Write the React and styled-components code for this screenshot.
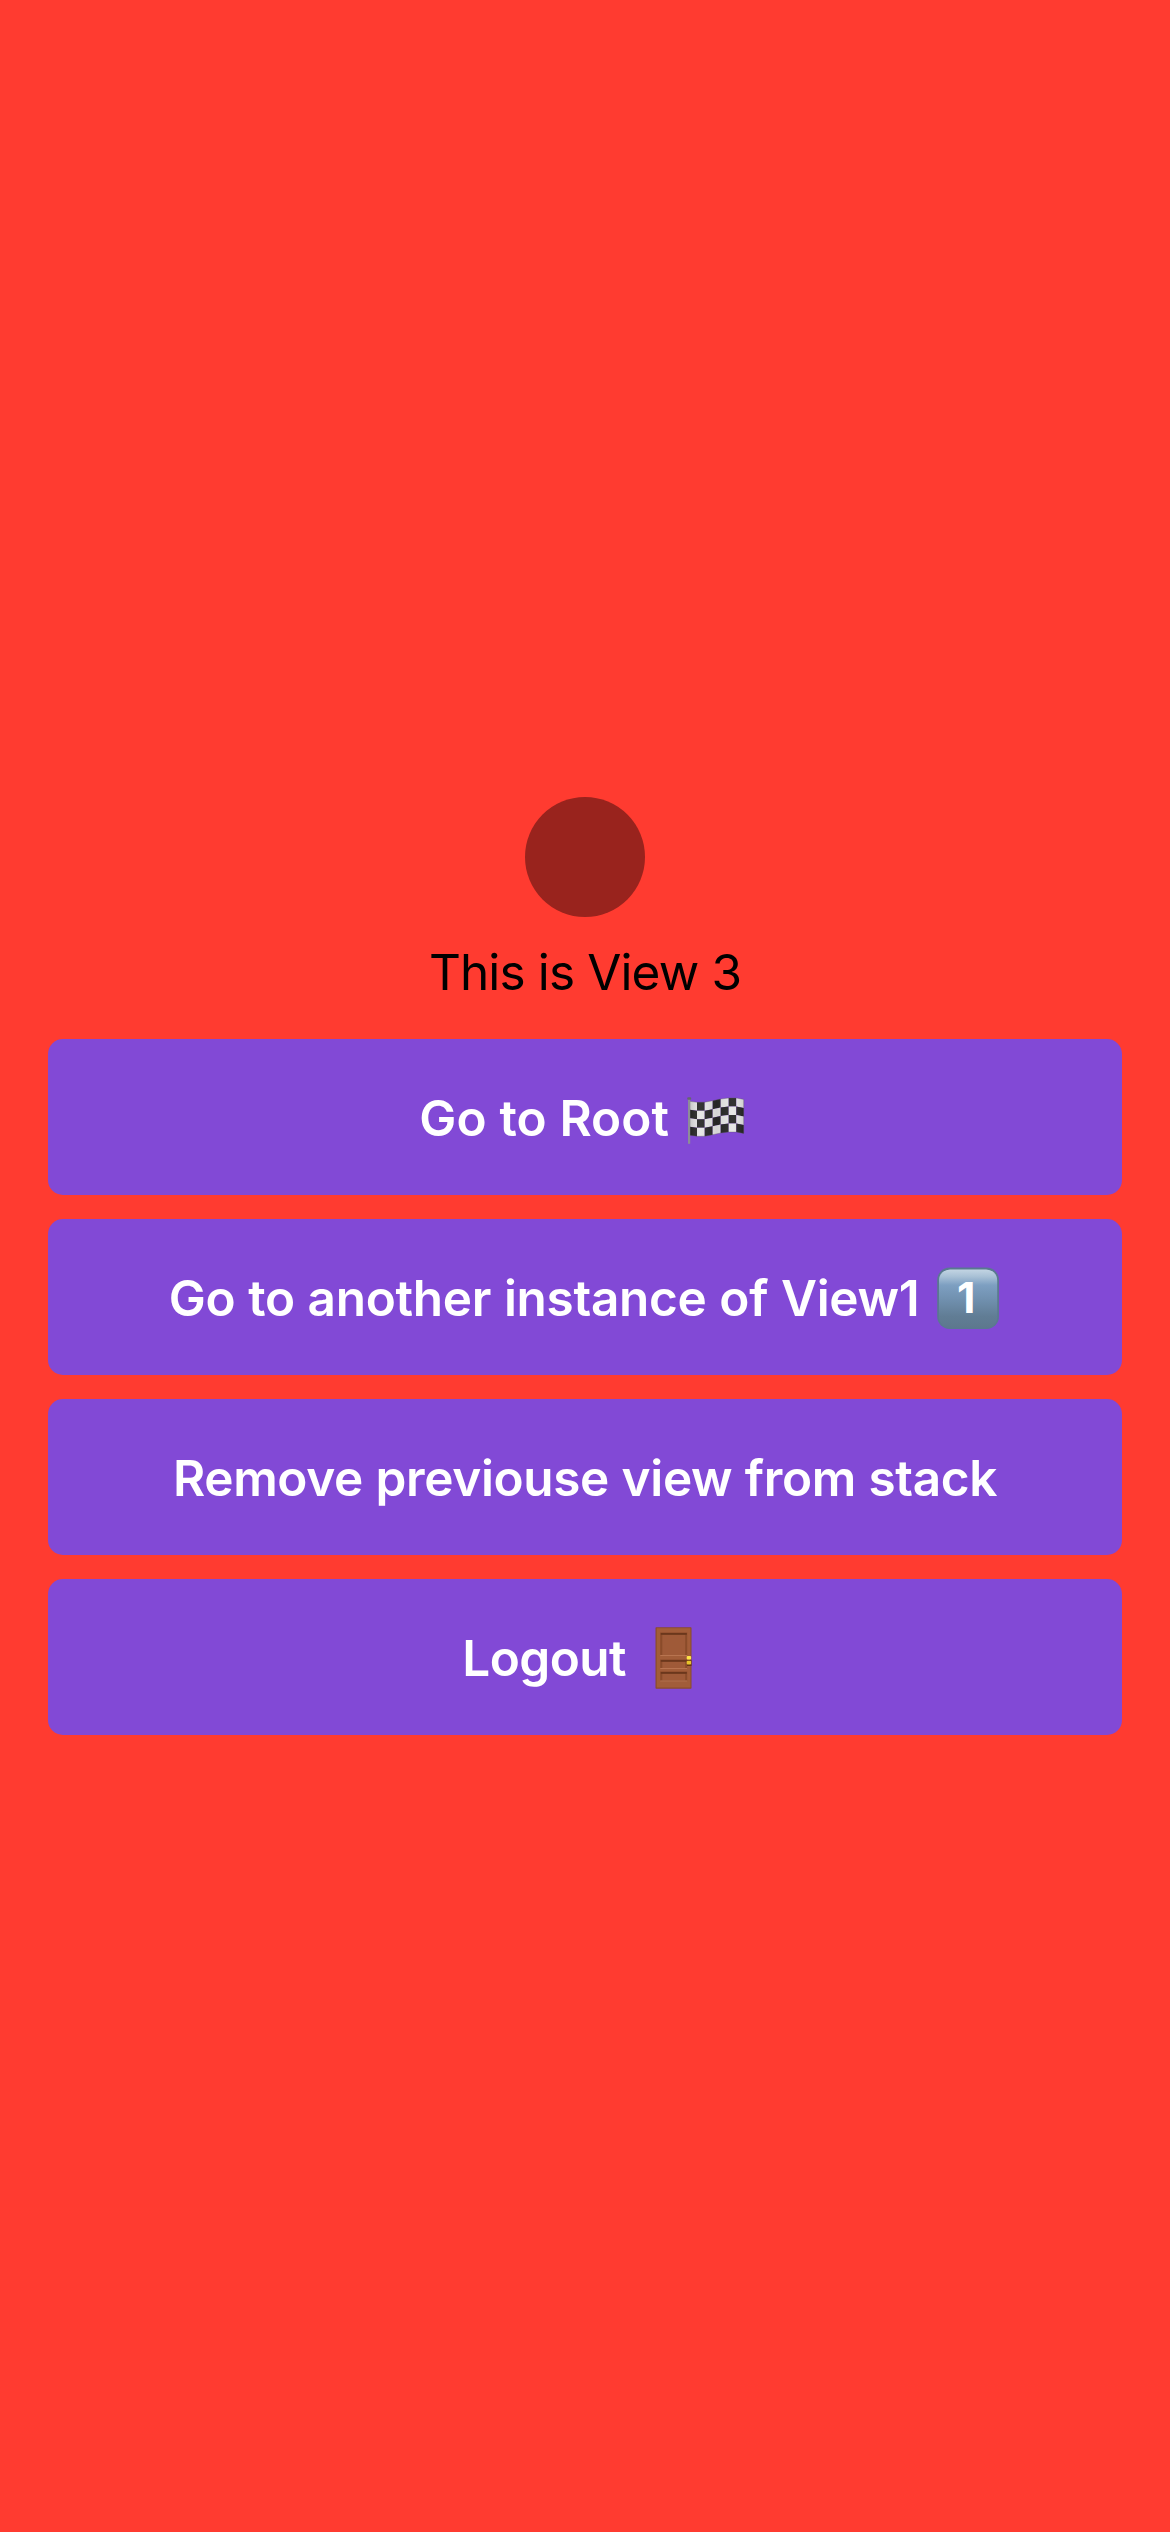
import React from 'react';
import styled, { createGlobalStyle } from 'styled-components';

const GlobalStyle = createGlobalStyle`
  * { box-sizing: border-box; }
  body { margin: 0; background: #ff3b30; }
`;

const Screen = styled.main`
  min-height: 2532px;
  padding: 0 48px;
  display: flex;
  flex-direction: column;
  justify-content: center;
  align-items: center;
  background: #ff3b30;
  font-family: Inter, Roboto, "Liberation Sans", sans-serif;
`;

const Dot = styled.div`
  width: 120px;
  height: 120px;
  border-radius: 50%;
  background: #99231d;
`;

const Title = styled.h1`
  margin: 24px 0;
  height: 74px;
  line-height: 62px;
  font-size: 49.5px;
  font-weight: 400;
  letter-spacing: -0.87px;
  color: #000;
  white-space: nowrap;
`;

const Actions = styled.div`
  align-self: stretch;
  display: flex;
  flex-direction: column;
  gap: 24px;
`;

const ActionButton = styled.button`
  height: 156px;
  padding: 2px 0 0;
  border: 0;
  border-radius: 15px;
  display: flex;
  align-items: center;
  justify-content: center;
  gap: 16.5px;
  background: #8249d6;
  color: #fff;
  font: 600 49.5px/62px Inter, Roboto, "Liberation Sans", sans-serif;
  letter-spacing: ${(p) => p.$tracking || 0}px;
  word-spacing: ${(p) => p.$wordGap || 0}px;
  white-space: nowrap;
`;

const Glyph = styled.svg`
  flex: none;
  width: 64px;
  height: 64px;
  margin-right: 1.3px;
  letter-spacing: 0;
`;

const FLAG_X = [4.7, 12, 19.7, 27.7, 35.7, 43.7, 51.3, 58.7];
const FLAG_TOP = [15.3, 16.3, 16.2, 14.7, 13, 12, 12, 13.4];
const ROW = 8.5;

function Flag() {
  const cells = [];
  for (let r = 0; r < 4; r++) {
    for (let c = 0; c < 7; c++) {
      const y0 = FLAG_TOP[c] + r * ROW;
      const y1 = FLAG_TOP[c + 1] + r * ROW;
      cells.push(
        <polygon
          key={`${r}-${c}`}
          points={`${FLAG_X[c]},${y0} ${FLAG_X[c + 1]},${y1} ${FLAG_X[c + 1]},${y1 + ROW} ${FLAG_X[c]},${y0 + ROW}`}
          fill={(r + c) % 2 ? '#282828' : '#e6e6e6'}
        />
      );
    }
  }
  const top = FLAG_X.map((x, i) => `${x},${FLAG_TOP[i]}`);
  const bottom = FLAG_X.map((x, i) => `${x},${FLAG_TOP[i] + ROW * 4}`).reverse();
  return (
    <Glyph viewBox="0 0 64 64" aria-label="Chequered flag">
      <defs>
        <linearGradient id="fold">
          <stop offset="0" stopColor="#000" stopOpacity=".14" />
          <stop offset=".2" stopColor="#fff" stopOpacity=".06" />
          <stop offset=".5" stopColor="#000" stopOpacity=".08" />
          <stop offset=".8" stopColor="#fff" stopOpacity=".05" />
          <stop offset="1" stopColor="#000" stopOpacity=".1" />
        </linearGradient>
      </defs>
      {cells}
      <polygon points={[...top, ...bottom].join(' ')} fill="url(#fold)" stroke="#555" strokeOpacity=".5" strokeWidth=".7" />
      <rect x="3" y="12.5" width="2.2" height="45.3" fill="#8d8d96" />
      <rect x="2.2" y="11.3" width="4" height="2.5" rx="1.1" fill="#66666e" />
    </Glyph>
  );
}

function KeycapOne() {
  return (
    <Glyph viewBox="0 0 64 64" aria-label="Keycap one">
      <defs>
        <linearGradient id="cap" x1="0" y1="0" x2="0" y2="1">
          <stop offset="0" stopColor="#c3d5e3" />
          <stop offset=".12" stopColor="#a9c1d6" />
          <stop offset=".27" stopColor="#7d9fc1" />
          <stop offset=".5" stopColor="#7191b0" />
          <stop offset=".8" stopColor="#617d95" />
          <stop offset="1" stopColor="#5d788e" />
        </linearGradient>
      </defs>
      <rect x="1.2" y="1.5" width="61.8" height="61.5" rx="12.5" fill="#597990" />
      <rect x="3" y="3.4" width="58.2" height="58.4" rx="11" fill="url(#cap)" />
      <text x="30.3" y="47.3" textAnchor="middle" fontFamily="Inter, sans-serif" fontSize="42.6" fontWeight="700" fill="#fff">1</text>
    </Glyph>
  );
}

const PANELS = [
  { y: 7, h: 22 },
  { y: 34, h: 8 },
  { y: 46, h: 8.5 },
];

function Door() {
  return (
    <Glyph viewBox="0 0 64 64" aria-label="Door">
      <rect x="13.5" y="1.2" width="36" height="61.5" rx=".8" fill="#8a4c2b" />
      <rect x="14.7" y="2.2" width="33.8" height="59.3" fill="#a25d39" />
      {PANELS.map(({ y, h }) => (
        <g key={y}>
          <rect x="18.2" y={y - 0.5} width="27" height={h + 1.2} fill="#8a4b2a" />
          <rect x="20.3" y={y + 1.5} width="22.9" height={h - 1.5} fill="#9f5a38" />
          <rect x="18.8" y={y} width="26" height="1.8" fill="#6b371c" />
          <rect x="18.2" y={y + h} width="27" height="1" fill="#b87450" />
        </g>
      ))}
      <rect x="45" y="34" width="4.5" height="6" fill="#633315" />
      <rect x="44.7" y="30" width="4.4" height="3.6" rx="1" fill="#ffe548" />
      <rect x="44.7" y="34.8" width="4.4" height="3.8" rx="1" fill="#e8c42b" />
    </Glyph>
  );
}

export default function App() {
  return (
    <>
      <GlobalStyle />
      <Screen>
        <Dot />
        <Title>This is View 3</Title>
        <Actions>
          <ActionButton $wordGap={0.4}>
            <span>Go to Root</span>
            <Flag />
          </ActionButton>
          <ActionButton $tracking={-0.3} $wordGap={0.65}>
            <span>Go to another instance of View1</span>
            <KeycapOne />
          </ActionButton>
          <ActionButton $tracking={-0.36} $wordGap={0.5}>
            <span>Remove previouse view from stack</span>
          </ActionButton>
          <ActionButton $tracking={-0.56}>
            <span>Logout</span>
            <Door />
          </ActionButton>
        </Actions>
      </Screen>
    </>
  );
}
